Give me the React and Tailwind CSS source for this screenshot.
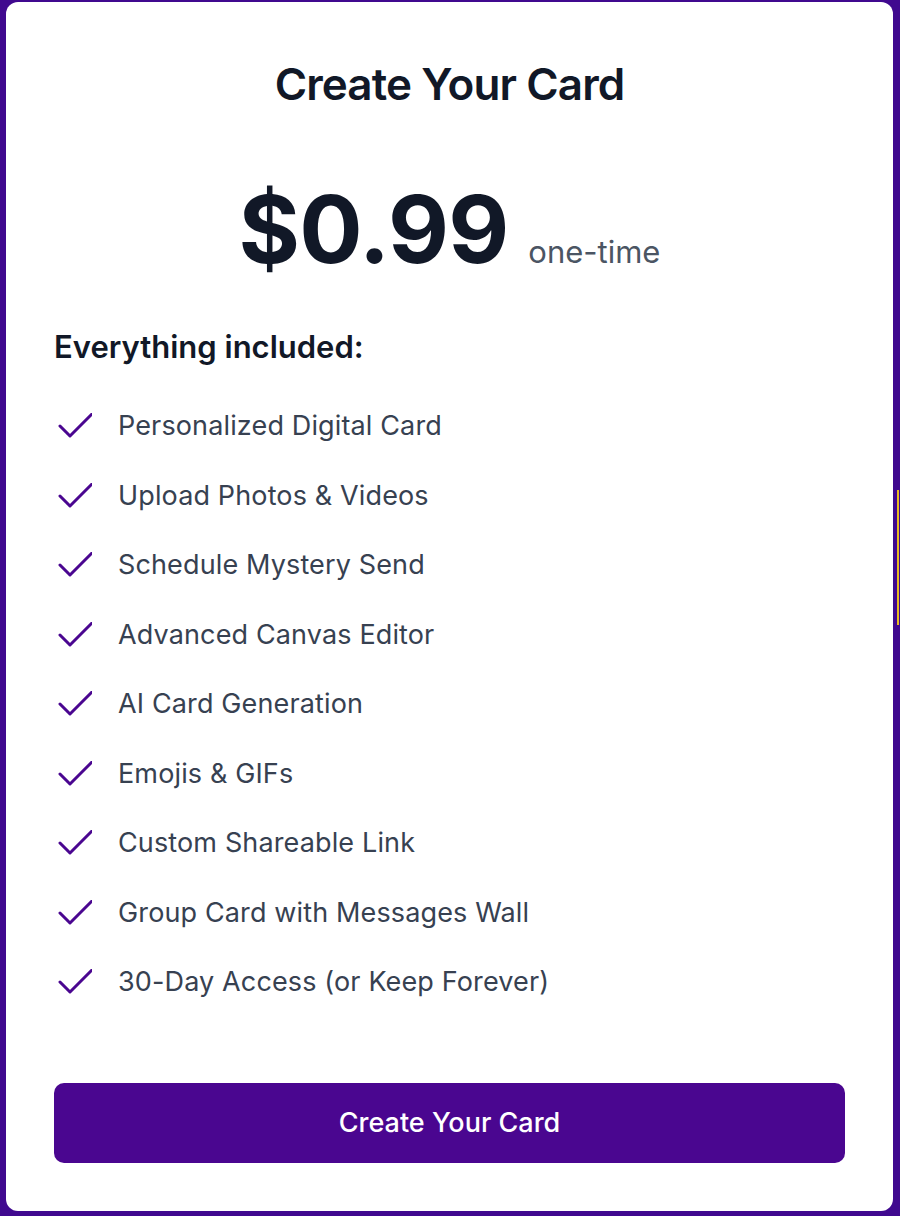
const features = [
  "Personalized Digital Card",
  "Upload Photos & Videos",
  "Schedule Mystery Send",
  "Advanced Canvas Editor",
  "AI Card Generation",
  "Emojis & GIFs",
  "Custom Shareable Link",
  "Group Card with Messages Wall",
  "30-Day Access (or Keep Forever)",
];

const CheckMark = () => (
  <svg width="36" height="26" viewBox="0 0 36 26" fill="none" className="shrink-0">
    <path d="M4 13 L14 23 L36 1" stroke="#4a0690" strokeWidth="3" strokeLinecap="round" strokeLinejoin="round" />
  </svg>
);

const App = () => {
  return (
    <div className="relative w-[900px] h-[1216px] bg-[#40098f] pt-[2px] pl-[6px] pr-[7px] pb-[5px] font-['Inter','Noto_Sans',sans-serif]">
      <div className="absolute right-[1px] top-[490px] h-[135px] w-[2px] bg-[#e8b923]" />
      <div className="h-full rounded-[12px] bg-white px-[48px] pt-[52px]">
        <h2 className="text-center text-[44px] leading-[60px] font-semibold tracking-[-0.02em] text-[#111827]">
          Create Your Card
        </h2>

        <div className="mt-[70px] flex items-baseline justify-center gap-[20px]">
          <span className="text-[94px] leading-[90px] font-bold tracking-[-0.01em] text-[#111827]">$0.99</span>
          <span className="text-[31px] text-[#4b5563]">one-time</span>
        </div>

        <h3 className="mt-[51px] text-[31px] leading-[40px] font-semibold text-[#111827]">Everything included:</h3>

        <ul className="mt-[25px] flex flex-col">
          {features.map((f) => (
            <li key={f} className="flex h-[69.5px] items-center gap-[26px] pl-[2px]">
              <CheckMark />
              <span className="text-[27px] tracking-[0.005em] text-[#374151]">{f}</span>
            </li>
          ))}
        </ul>

        <button className="mt-[66px] flex h-[80px] w-full items-center justify-center rounded-[10px] bg-[#4a0690] text-[27px] font-medium text-white">
          Create Your Card
        </button>
      </div>
    </div>
  );
};

export default App;
